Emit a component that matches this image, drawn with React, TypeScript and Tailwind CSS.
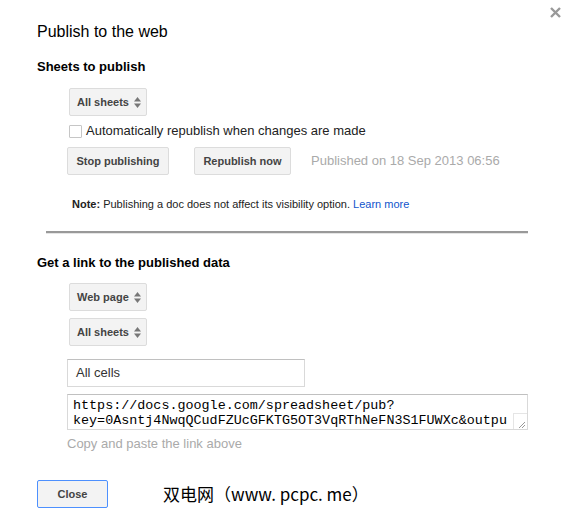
import React from "react";

function Arrows() {
  return (
    <svg width="7" height="11" viewBox="0 0 7 11" className="ml-[5px]">
      <path d="M3.5 0 L7 4.5 L0 4.5 Z" fill="#777" />
      <path d="M3.5 11 L7 6.5 L0 6.5 Z" fill="#777" />
    </svg>
  );
}

function Select({ label }: { label: string }) {
  return (
    <div className="flex h-[28px] w-fit items-center rounded-[2px] border border-[#dcdcdc] bg-[#f3f3f3] pl-[7px] pr-[5px] text-[11px] font-bold text-[#444]">
      <span>{label}</span>
      <Arrows />
    </div>
  );
}

function Button({ label, className = "" }: { label: string; className?: string }) {
  return (
    <button
      className={`flex h-[28px] items-center justify-center rounded-[2px] border border-[#dcdcdc] bg-[#f3f3f3] text-[11px] font-bold text-[#444] ${className}`}
    >
      {label}
    </button>
  );
}

export default function App() {
  return (
    <div
      className="relative h-[520px] w-[570px] bg-white pl-[37px] pt-[22px] text-[13px] text-[#222]"
      style={{ fontFamily: '"Liberation Sans", Arial, sans-serif' }}
    >
      <svg
        width="11"
        height="11"
        viewBox="0 0 11 11"
        className="absolute right-[9px] top-[7px]"
      >
        <path d="M1 1 L10 10 M10 1 L1 10" stroke="#999" strokeWidth="2.4" />
      </svg>

      <div className="text-[16px] leading-[20px] text-black">Publish to the web</div>

      <div className="mt-[17px] text-[13px] font-bold leading-[16px] text-black">
        Sheets to publish
      </div>

      <div className="pl-[32px]">
        <div className="mt-[13px]">
          <Select label="All sheets" />
        </div>
        <div className="mt-[7px] flex h-[16px] items-center">
          <div className="h-[13px] w-[13px] rounded-[1px] border border-[#c6c6c6] bg-white" />
          <span className="ml-[4px] text-[13px] text-[#222]">
            Automatically republish when changes are made
          </span>
        </div>
        <div className="ml-[-2px] mt-[8px] flex items-center">
          <Button label="Stop publishing" className="w-[102px]" />
          <Button label="Republish now" className="ml-[25px] w-[97px]" />
          <span className="ml-[20px] text-[13px] text-[#aaa]">
            Published on 18 Sep 2013 06:56
          </span>
        </div>
        <div className="ml-[3px] mt-[22px] text-[11px] leading-[14px] text-[#222]">
          <span className="font-bold">Note:</span> Publishing a doc does not affect its
          visibility option. <span className="text-[#1155cc]">Learn more</span>
        </div>
      </div>

      <div className="ml-[9px] mt-[20px] w-[482px] border-t-2 border-b border-t-[#999] border-b-[#e5e5e5]" />

      <div className="mt-[21px] text-[13px] font-bold leading-[16px] text-black">
        Get a link to the published data
      </div>

      <div className="pl-[32px]">
        <div className="mt-[12px]">
          <Select label="Web page" />
        </div>
        <div className="mt-[7px]">
          <Select label="All sheets" />
        </div>
        <div className="ml-[-2px] mt-[13px] flex h-[28px] w-[238px] items-center border border-[#d9d9d9] border-t-[#c0c0c0] pl-[8px] text-[13px] text-[#333]">
          All cells
        </div>
        <div className="relative ml-[-2px] mt-[7px] h-[36px] w-[461px] overflow-hidden border border-[#d9d9d9] border-t-[#c0c0c0] pl-[5px] pt-[3px]">
          <div
            className="whitespace-nowrap text-[13.4px] leading-[15px] text-black"
            style={{ fontFamily: '"Liberation Mono", "Courier New", monospace' }}
          >
            https://docs.google.com/spreadsheet/pub?
            <br />
            key=0Asntj4NwqQCudFZUcGFKTG5OT3VqRThNeFN3S1FUWXc&amp;outpu
          </div>
          <div className="absolute bottom-0 right-0 h-[16px] w-[14px] border-l border-t border-[#e5e5e5] bg-white">
            <svg width="14" height="16" viewBox="0 0 14 16">
              <path d="M11 8 L5 14 M11 11 L8 14" stroke="#999" strokeWidth="1" />
            </svg>
          </div>
        </div>
        <div className="ml-[-2px] mt-[6px] text-[13px] leading-[16px] text-[#aaa]">
          Copy and paste the link above
        </div>
      </div>

      <div className="mt-[28px] flex items-center">
        <button className="flex h-[28px] w-[71px] items-center justify-center rounded-[2px] border border-[#4d90fe] bg-[#f3f3f3] text-[11px] font-bold text-[#444]">
          Close
        </button>
        <span
          className="ml-[55px] text-[17px] text-black"
          style={{ fontFamily: '"Noto Sans CJK SC", "Liberation Sans", sans-serif' }}
        >
          双电网（www. pcpc. me）
        </span>
      </div>
    </div>
  );
}
